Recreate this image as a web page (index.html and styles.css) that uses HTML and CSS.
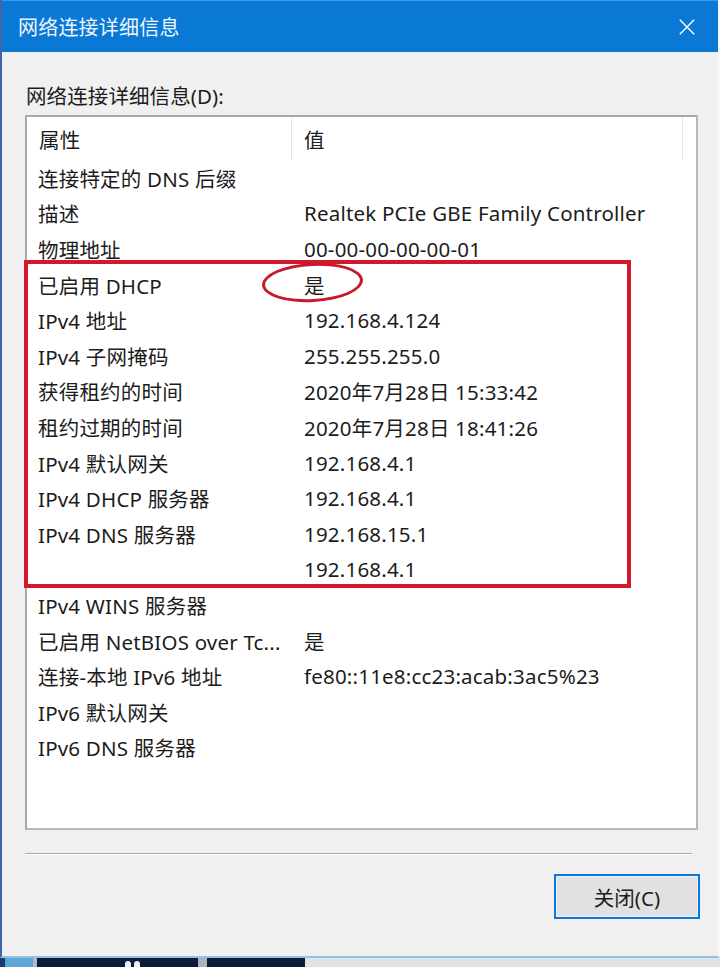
FILE: index.html
```html
<!DOCTYPE html>
<html lang="zh-CN">
<head>
<meta charset="utf-8">
<title>网络连接详细信息</title>
<link rel="stylesheet" href="styles.css">
</head>
<body>
<div class="window">
  <div class="titlebar">
    <span class="title">网络连接详细信息</span>
    <svg class="close" viewBox="0 0 20 20" width="20" height="20"><path d="M2 2 L18 18 M18 2 L2 18" stroke="#ffffff" stroke-width="1.6" fill="none"/></svg>
  </div>
  <div class="body">
    <div class="label">网络连接详细信息(D):</div>
    <div class="listbox">
      <div class="header">
        <div class="hcell">属性</div>
        <div class="hcell">值</div>
        <div class="hcell filler"></div>
      </div>
      <div class="row"><span class="k">连接特定的 DNS 后缀</span><span class="v"></span></div>
      <div class="row"><span class="k">描述</span><span class="v">Realtek PCIe GBE Family Controller</span></div>
      <div class="row"><span class="k">物理地址</span><span class="v">00-00-00-00-00-01</span></div>
      <div class="group">
        <div class="row"><span class="k">已启用 DHCP</span><span class="v ringed">是<span class="ring"></span></span></div>
        <div class="row"><span class="k">IPv4 地址</span><span class="v">192.168.4.124</span></div>
        <div class="row"><span class="k">IPv4 子网掩码</span><span class="v">255.255.255.0</span></div>
        <div class="row"><span class="k">获得租约的时间</span><span class="v">2020年7月28日 15:33:42</span></div>
        <div class="row"><span class="k">租约过期的时间</span><span class="v">2020年7月28日 18:41:26</span></div>
        <div class="row"><span class="k">IPv4 默认网关</span><span class="v">192.168.4.1</span></div>
        <div class="row"><span class="k">IPv4 DHCP 服务器</span><span class="v">192.168.4.1</span></div>
        <div class="row"><span class="k">IPv4 DNS 服务器</span><span class="v">192.168.15.1</span></div>
        <div class="row"><span class="k"></span><span class="v">192.168.4.1</span></div>
      </div>
      <div class="row"><span class="k">IPv4 WINS 服务器</span><span class="v"></span></div>
      <div class="row"><span class="k">已启用 NetBIOS over Tc...</span><span class="v">是</span></div>
      <div class="row"><span class="k">连接-本地 IPv6 地址</span><span class="v">fe80::11e8:cc23:acab:3ac5%23</span></div>
      <div class="row"><span class="k">IPv6 默认网关</span><span class="v"></span></div>
      <div class="row"><span class="k">IPv6 DNS 服务器</span><span class="v"></span></div>
    </div>
    <div class="sep"></div>
    <div class="footer">
      <button class="btn">关闭(C)</button>
    </div>
  </div>
</div>
<div class="taskbar">
  <div class="tb tb-edge"></div>
  <div class="tb tb-start"></div>
  <div class="tb tb-gap"></div>
  <div class="tb tb-app"><span class="dot"></span><span class="dot"></span></div>
  <div class="tb tb-gap2"></div>
  <div class="tb tb-app2"></div>
  <div class="tb tb-rest"></div>
</div>
</body>
</html>
```

FILE: styles.css
```css
* { box-sizing: border-box; }

html, body {
  margin: 0;
  padding: 0;
  width: 720px;
  height: 967px;
  overflow: hidden;
  background: #f0f0f0;
  font-family: "Noto Sans", "Noto Sans CJK SC", sans-serif;
  color: #1c1c1c;
}

.window {
  width: 720px;
  height: 958px;
  display: flex;
  flex-direction: column;
  border-left: 2px solid #3d66a8;
  border-right: 2px solid #f8f8f8;
  border-bottom: 2px solid #8fc3ea;
  background: #f0f0f0;
}

.titlebar {
  height: 52px;
  flex: none;
  background: #0a78d5;
  border-top: 1px solid #3f96e0;
  display: flex;
  align-items: center;
  justify-content: space-between;
  padding: 0 16px 0 16px;
  color: #ffffff;
}

.title {
  font-size: 20px;
  letter-spacing: 0.2px;
  color: #eef5fc;
  margin-top: -1px;
}

.close {
  width: 18px;
  height: 18px;
  margin-right: 6px;
}

.body {
  flex: 1;
  display: flex;
  flex-direction: column;
  padding: 32px 20px 0 23px;
}

.label {
  font-size: 20.5px;
  line-height: 24px;
  height: 24px;
  padding-left: 1px;
  letter-spacing: 0.1px;
}

.listbox {
  margin-top: 7px;
  height: 715px;
  background: #ffffff;
  border: 2px solid #a9a9a9;
  border-right-color: #b8b8b8;
  border-bottom-color: #b8b8b8;
  font-size: 20.5px;
  letter-spacing: 0.2px;
}

.header {
  display: grid;
  grid-template-columns: 265px 391px 1fr;
  height: 43px;
}

.hcell {
  border-right: 1px solid #e6e6e6;
  padding-left: 12px;
  display: flex;
  align-items: center;
  padding-top: 1px;
}

.hcell.filler { border-right: none; }

.row {
  display: grid;
  grid-template-columns: 265px 1fr;
  height: 35.6px;
  align-items: center;
  white-space: nowrap;
}

.k { padding-left: 11px; }
.v { padding-left: 12px; }

.group {
  position: relative;
}

.group::before {
  content: "";
  position: absolute;
  top: -7px;
  bottom: -1px;
  left: -3px;
  width: 599px;
  border: 4px solid #d3172c;
  pointer-events: none;
}

.ringed {
  position: relative;
}

.ring {
  position: absolute;
  left: -30px;
  top: -7px;
  width: 101px;
  height: 39px;
  border: 3px solid #c8192c;
  border-radius: 50%;
  transform: rotate(-3deg);
}

.sep {
  margin-top: 23px;
  margin-right: 6px;
  height: 2px;
  border-top: 1px solid #a8a8a8;
  border-bottom: 1px solid #ffffff;
}

.footer {
  display: flex;
  justify-content: flex-end;
  margin-top: 19px;
  margin-right: -2px;
}

.btn {
  width: 146px;
  height: 45px;
  background: #e1e1e1;
  border: 2px solid #0a78d5;
  font-family: "Noto Sans", "Noto Sans CJK SC", sans-serif;
  font-size: 20.5px;
  color: #1c1c1c;
  padding: 0;
  box-shadow: inset 0 0 0 1px #e8f1fa;
}

.taskbar {
  height: 9px;
  display: flex;
}

.tb { height: 9px; }
.tb-edge { width: 5px; background: #1b3a6b; }
.tb-start { width: 28px; background: #5ea6d8; }
.tb-gap { width: 4px; background: #aeb8c4; }
.tb-app {
  width: 161px;
  background: #0d1b3b;
  display: flex;
  gap: 3px;
  padding-top: 3px;
  padding-left: 88px;
}
.dot {
  width: 6px;
  height: 6px;
  border-radius: 3px 3px 0 0;
  background: #e8eef6;
}
.tb-gap2 { width: 9px; background: #a9b2bf; }
.tb-app2 { width: 98px; background: #0d1b3b; }
.tb-rest { flex: 1; background: #e2e2e2; }
```
